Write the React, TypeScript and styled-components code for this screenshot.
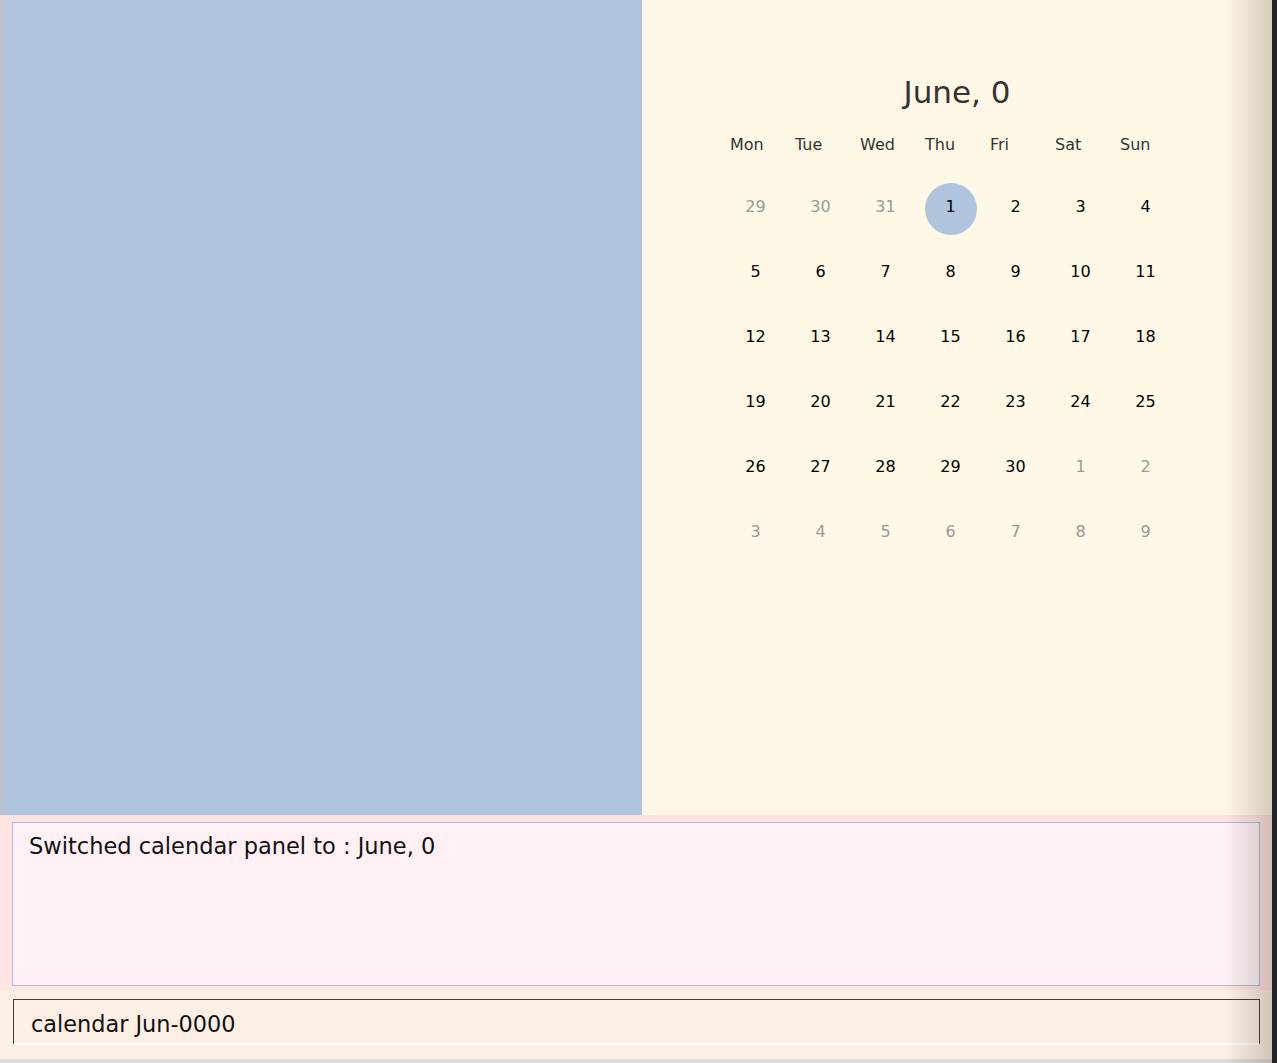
import styled, { createGlobalStyle } from "styled-components";

const GlobalStyle = createGlobalStyle`
    html, body {
        margin: 0;
        padding: 0;
        height: 100%;
        overflow: hidden;
    }

    body {
        font-family: "DejaVu Sans", "Liberation Sans", sans-serif;
    }
`;

const Window = styled.div`
    display: flex;
    width: 1277px;
    height: 1063px;
`;

const Main = styled.div`
    position: relative;
    flex: 1;
    display: flex;
    flex-direction: column;

    &::after {
        content: "";
        position: absolute;
        top: 0;
        right: 0;
        bottom: 0;
        width: 48px;
        pointer-events: none;
        background: linear-gradient(to right, rgba(60, 50, 30, 0), rgba(60, 50, 30, 0.22));
    }
`;

const Edge = styled.div`
    width: 5px;
    background-color: #1f2428;
`;

const TopSection = styled.div`
    display: flex;
    height: 815px;
`;

const ListPanel = styled.div`
    width: 641px;
    background-color: #b0c4de;
    border-left: 1px solid #c2c2c2;
`;

const CalendarPanel = styled.div`
    flex: 1;
    display: flex;
    flex-direction: column;
    background-color: #fff8e7;
`;

const MonthTitle = styled.h2`
    margin: 74px 0 0;
    font-size: 31px;
    line-height: 36px;
    font-weight: normal;
    text-align: center;
    color: #333;
`;

const Grid = styled.div`
    display: grid;
    grid-template-columns: repeat(7, 65px);
`;

const HeaderRow = styled(Grid)`
    margin: 25px 0 0 80px;
`;

const DayName = styled.span`
    padding-left: 8px;
    font-size: 16px;
    line-height: 19px;
    color: #333;
`;

const DayGrid = styled(Grid)`
    margin: 29px 0 0 81px;
    grid-auto-rows: 52px;
    row-gap: 13px;
`;

const DayCell = styled.div<{ $muted?: boolean; $selected?: boolean }>`
    justify-self: center;
    width: 52px;
    height: 52px;
    box-sizing: border-box;
    padding-bottom: 6px;
    border-radius: 50%;
    display: flex;
    align-items: center;
    justify-content: center;
    font-size: 16px;
    color: ${p => (p.$muted ? "#9a9a9a" : "#000")};
    background-color: ${p => (p.$selected ? "#b0c4de" : "transparent")};
`;

const ResultSection = styled.div`
    height: 175px;
    box-sizing: border-box;
    padding: 7px 12px 4px;
    background-color: #ffe4e1;
`;

const ResultBox = styled.div`
    height: 100%;
    box-sizing: border-box;
    padding: 10px 16px;
    background-color: #fff0f5;
    border: 1px solid #a9bedb;
    font-size: 22.5px;
    color: #111;
`;

const CommandSection = styled.div`
    height: 69px;
    box-sizing: border-box;
    padding: 9px 12px 14px 13px;
    background-color: #fdefe4;
`;

const CommandBox = styled.div`
    height: 100%;
    box-sizing: border-box;
    padding: 11px 17px 0;
    border: 1px solid #3d3d3d;
    border-bottom: 2px solid #ffffff;
    font-size: 22.4px;
    color: #111;
`;

const BottomLine = styled.div`
    height: 4px;
    background-color: #dcdcdc;
`;

type Day = { label: number; muted?: boolean; selected?: boolean };

const dayNames = ["Mon", "Tue", "Wed", "Thu", "Fri", "Sat", "Sun"];

const days: Day[] = [
    { label: 29, muted: true },
    { label: 30, muted: true },
    { label: 31, muted: true },
    ...Array.from({ length: 30 }, (_, i) => ({ label: i + 1, selected: i === 0 })),
    ...Array.from({ length: 9 }, (_, i) => ({ label: i + 1, muted: true })),
];

function App() {
    return (
        <>
            <GlobalStyle />
            <Window>
                <Main>
                    <TopSection>
                        <ListPanel />
                        <CalendarPanel>
                            <MonthTitle>June, 0</MonthTitle>
                            <HeaderRow>
                                {dayNames.map(name => (
                                    <DayName key={name}>{name}</DayName>
                                ))}
                            </HeaderRow>
                            <DayGrid>
                                {days.map((day, i) => (
                                    <DayCell key={i} $muted={day.muted} $selected={day.selected}>
                                        {day.label}
                                    </DayCell>
                                ))}
                            </DayGrid>
                        </CalendarPanel>
                    </TopSection>
                    <ResultSection>
                        <ResultBox>Switched calendar panel to : June, 0</ResultBox>
                    </ResultSection>
                    <CommandSection>
                        <CommandBox>calendar Jun-0000</CommandBox>
                    </CommandSection>
                    <BottomLine />
                </Main>
                <Edge />
            </Window>
        </>
    );
}

export default App;
